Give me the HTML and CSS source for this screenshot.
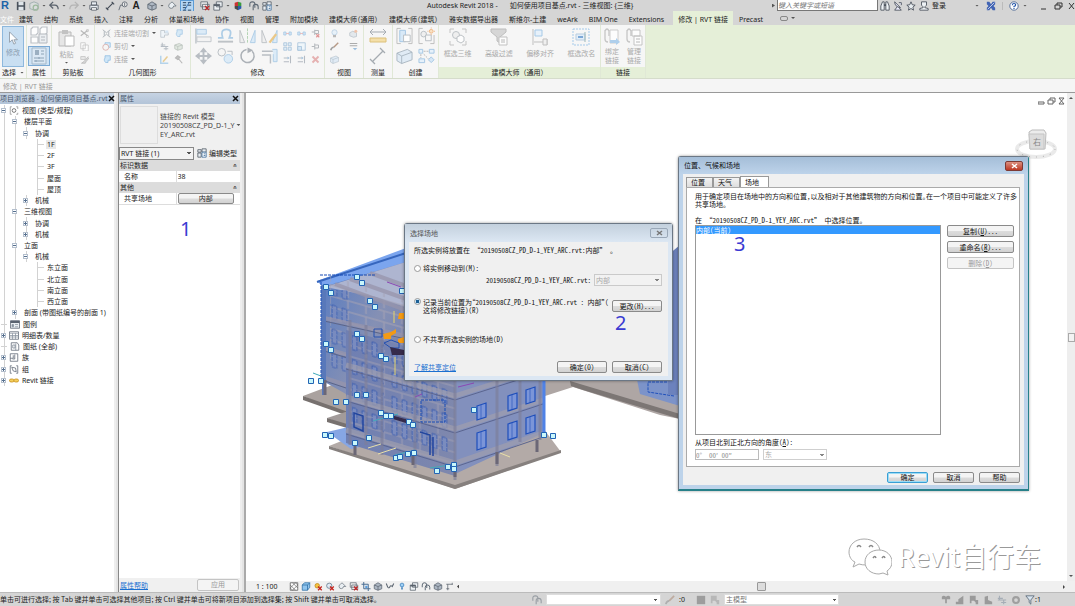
FILE: index.html
```html
<!DOCTYPE html>
<html lang="zh-CN">
<head>
    <meta charset="UTF-8">
    <meta name="viewport" content="width=device-width, initial-scale=1.0">
    <title>Autodesk Revit 2018</title>
    <link rel="stylesheet" href="styles.css">
</head>
<body>

<!-- Icon set -->
<svg class="sprite" aria-hidden="true">
    <symbol id="save" viewBox="0 0 12 12"><path d="M1 1h10v10H1z" fill="#4a525c"/><path d="M3 1h6v4H3zM3 7h6v4H3z" fill="#dfe5ea"/></symbol>
    <symbol id="sync" viewBox="0 0 12 12"><path d="M1 3l5-2 5 2v6l-5 2-5-2z" fill="#d8dcdc" stroke="#9aa"/><circle cx="8" cy="8" r="3" fill="none" stroke="#9db89d" stroke-width="1.5"/></symbol>
    <symbol id="undo" viewBox="0 0 12 12"><path d="M5 1L1 5l4 4M1 5h6q4 0 4 5" fill="none" stroke="#5a626c" stroke-width="1.5"/></symbol>
    <symbol id="redo" viewBox="0 0 12 12"><path d="M7 1l4 4-4 4M11 5H5Q1 5 1 10" fill="none" stroke="#b4b4b4" stroke-width="1.5"/></symbol>
    <symbol id="print" viewBox="0 0 12 12"><path d="M3 1h6v4H3zM1 5h10v5H1z" fill="#e8edf2" stroke="#555d66"/><path d="M3 8h6v3H3z" fill="#fff" stroke="#555d66"/></symbol>
    <symbol id="ruler" viewBox="0 0 12 12"><path d="M2 10l8-8M1 8l3 3M8 1l3 3" fill="none" stroke="#454d58" stroke-width="1.4"/></symbol>
    <symbol id="tag" viewBox="0 0 12 12"><circle cx="8" cy="4" r="3" fill="#eee" stroke="#59616c"/><path d="M1 11l2-6h3" fill="none" stroke="#59616c"/><path d="M8 2v4" stroke="#59616c"/></symbol>
    <symbol id="box3d" viewBox="0 0 12 12"><path d="M1 4l5-3 5 3v5l-5 2-5-2z" fill="#aeb8c4" stroke="#5d6671"/><path d="M1 4l5 2 5-2M6 6v5" fill="none" stroke="#5d6671"/></symbol>
    <symbol id="section" viewBox="0 0 12 12"><path d="M6 1l5 5H8a3 3 0 1 1-4-3z" fill="#e9eef2" stroke="#6e7780"/></symbol>
    <symbol id="thin" viewBox="0 0 12 12"><path d="M1 2h4M1 5h4M1 8h4M1 11h4M7 2h4M7 5h4M7 11h4" stroke="#31475e" stroke-width="1.2"/><path d="M3 11l6-10" stroke="#2c6cb0"/></symbol>
    <symbol id="closewin" viewBox="0 0 12 12"><path d="M1 1h8v6H1zM3 4h8v6H3z" fill="#eee" stroke="#626a73"/><path d="M6 6l5 5M11 6l-5 5" stroke="#c02424" stroke-width="1.5"/></symbol>
    <symbol id="windows" viewBox="0 0 12 12"><path d="M4 1h7v6H4zM1 4h7v7H1z" fill="#edf1f4" stroke="#59616b"/><path d="M1 5h7" stroke="#59616b" stroke-width="2"/></symbol>
    <symbol id="palette" viewBox="0 0 12 12"><path d="M2 2l4-1v5H2z" fill="#c33"/><path d="M6 1l4 1v4H6z" fill="#3a9a3f"/><path d="M2 6h4v5L2 9z" fill="#4a4a4a"/><path d="M6 6h4v3l-4 2z" fill="#2c5cab"/></symbol>
    <symbol id="linkman" viewBox="0 0 12 12"><path d="M1 7V4q0-3 3-3t3 3v4M5 11V7q0-3 3-3t3 3v3" fill="none" stroke="#5c6773" stroke-width="1.3"/></symbol>
    <symbol id="edittype" viewBox="0 0 12 12"><path d="M1 2h4v3H1zM6 1h5v4H6zM1 6h4v5H1z" fill="#e8edf2" stroke="#59616b"/><path d="M6 5h5v6H6z" fill="#fff" stroke="#3f6f9e"/><path d="M8 7h2M8 9h2" stroke="#3f6f9e"/></symbol>
    <symbol id="binoc" viewBox="0 0 12 12"><path d="M1 11V6l2-5h2v10zM7 11V1h2l2 5v5z" fill="#eef2f5" stroke="#434b56"/><path d="M5 5h2" stroke="#434b56" stroke-width="2"/></symbol>
    <symbol id="dish" viewBox="0 0 12 12"><path d="M2 1q0 6 7 7L2 1M5 7l-3 4h8L7 8M7 2h3v3" fill="#eef" stroke="#434b56"/></symbol>
    <symbol id="star" viewBox="0 0 12 12"><path d="M6 1l1.500 3.500L11 5 8.300 7.300 9 11 6 9 3 11l.7-3.700L1 5l3.500-.5z" fill="#e8edf0" stroke="#434b56"/></symbol>
    <symbol id="user" viewBox="0 0 12 12"><path d="M3 1h6v4L7 7v1l4 1v2H1V9l4-1V7L3 5z" fill="#eef2f5" stroke="#434b56"/></symbol>
    <symbol id="exchange" viewBox="0 0 12 12"><path d="M1 1h3l2 3 2-3h3v3L9 6l2 2v3H8L6 8l-2 3H1V8l2-2-2-2z" fill="#4264b4"/><path d="M2 10l8-8" stroke="#dfe5f2"/></symbol>
    <symbol id="help" viewBox="0 0 12 12"><circle cx="6" cy="6" r="5" fill="#fff" stroke="#3c5a8c"/><path d="M4 5q0-2 2-2t2 1.500Q8 6 6 6.500v1M6 8.500v1" fill="none" stroke="#2355a8" stroke-width="1.400"/></symbol>

    <symbol id="cursor" viewBox="0 0 12 16"><path d="M2 1v12l3-3 2 5 2-1-2-4h4z" fill="#fff" stroke="#8f9aa6"/></symbol>
    <symbol id="family" viewBox="0 0 18 18"><path d="M1 3l2-2h5v6L6 9H1zM10 3l2-2h5v6l-2 2h-5zM1 11h7v6H1z" fill="#fff" stroke="#b0b5bb" stroke-width="1.200"/><path d="M9 8h8v9H9z" fill="#e9edf1" stroke="#a3a9b0"/><path d="M11 11h4M11 14h4" stroke="#a3a9b0"/></symbol>
    <symbol id="props" viewBox="0 0 18 18"><path d="M2 1h14v16H2z" fill="#dfeaf4" stroke="#9aaebf"/><path d="M5 3h4v5H5z" fill="#8fa3b5"/><path d="M11 4h3M11 7h3M4 11h10M4 14h10M9 10v2M6 13v2" stroke="#7d93a8"/></symbol>
    <symbol id="paste" viewBox="0 0 18 18"><path d="M1 3h12v14H1z" fill="#e6e6e6" stroke="#b9b9b9"/><path d="M4 1h6v4H4z" fill="#c2c2c2"/><path d="M7 7h9v10H7z" fill="#fff" stroke="#b9b9b9"/></symbol>
    <symbol id="cut" viewBox="0 0 12 12"><path d="M1 2l9 7M1 9l9-7" stroke="#a9a9a9" stroke-width="1.500"/><circle cx="10" cy="10" r="1.500" fill="none" stroke="#a9a9a9"/><circle cx="10" cy="2" r="1.500" fill="none" stroke="#a9a9a9"/></symbol>
    <symbol id="copy" viewBox="0 0 12 12"><path d="M1 1h6v8H1zM4 4h7v8H4z" fill="#fff" stroke="#b5b5b5"/></symbol>
    <symbol id="brush" viewBox="0 0 12 12"><path d="M1 2h6v4H1z" fill="#e3e3e3" stroke="#b5b5b5"/><path d="M11 2L6 8l-4 3h5l1-2 4-5" fill="#cfcfcf" stroke="#a9a9a9"/></symbol>
    <symbol id="cope" viewBox="0 0 12 12"><path d="M1 1l5 4 5-4M1 11l5-4 5 4M3 3v6M9 3v6" fill="none" stroke="#b0b6bb" stroke-width="1.300"/></symbol>
    <symbol id="trimc" viewBox="0 0 12 12"><path d="M4 1h7v6H4z" fill="#d7ebfa" stroke="#8fbfe3"/><circle cx="5" cy="7" r="4" fill="#f6f6f6" stroke="#d6a6a0"/></symbol>
    <symbol id="join" viewBox="0 0 12 12"><path d="M4 1h7v6H8v3H5a4 4 0 0 1-1-6z" fill="#cfe6f7" stroke="#8dbbe0"/></symbol>
    <symbol id="wall" viewBox="0 0 12 12"><path d="M1 2h5v3h5v3H6v3H1z" fill="#eff5fa" stroke="#a9b4be"/><path d="M7 2h4v3H7z" fill="#cfe3f4"/></symbol>
    <symbol id="beam" viewBox="0 0 12 12"><path d="M1 4h6M1 6h10M5 9h6M3 1v5M8 6v5" fill="none" stroke="#a5adb6" stroke-width="1.300"/></symbol>
    <symbol id="cropoff" viewBox="0 0 12 12"><path d="M3 3v8M1 3h8M9 1v3M1 9h4" fill="none" stroke="#59616b"/></symbol>
    <symbol id="solid" viewBox="0 0 12 12"><path d="M1 4l6-2 4 2v5l-6 2-4-2z" fill="#dde5dd" stroke="#a9b4ac"/><path d="M1 4l4 2 6-2M5 6v5" fill="none" stroke="#a9b4ac"/></symbol>
    <symbol id="paint" viewBox="0 0 12 12"><path d="M1 1v10h10" fill="none" stroke="#a6cbe8" stroke-width="2"/><path d="M4 9l6-7" stroke="#e5c37c" stroke-width="2"/></symbol>
    <symbol id="demo" viewBox="0 0 12 12"><path d="M2 4l3-3 3 2-3 3zM6 5l5 6" fill="#b4b4b4" stroke="#a9a9a9" stroke-width="1.500"/></symbol>
    <symbol id="align" viewBox="0 0 18 18"><path d="M1 1v16" stroke="#aeb6bd" stroke-width="1.500"/><path d="M2 2h10v5H2z" fill="#d6e9f8" stroke="#9cc3e3"/><path d="M2 10h15v5H2z" fill="#f3f3f3" stroke="#b5bbc1"/></symbol>
    <symbol id="offset" viewBox="0 0 18 18"><path d="M1 11h5q-3-9 4-9t3 9h4" fill="none" stroke="#9cc3e3" stroke-width="1.800"/><path d="M1 15h16" stroke="#b0b6bb" stroke-width="2"/></symbol>
    <symbol id="mirror" viewBox="0 0 18 18"><path d="M1 16V3l5 13z" fill="#eee" stroke="#b0b6bb"/><path d="M17 16V3l-5 13z" fill="#d6e9f8" stroke="#9cc3e3"/><path d="M9 1v16" stroke="#9fc99f" stroke-dasharray="3 1"/></symbol>
    <symbol id="mirrord" viewBox="0 0 18 18"><path d="M1 16V3l5 13z" fill="#eee" stroke="#b0b6bb"/><path d="M17 16V3l-5 13z" fill="#d6e9f8" stroke="#9cc3e3"/><path d="M9 16l7-9" stroke="#e9bd6b" stroke-width="2.500"/></symbol>
    <symbol id="move" viewBox="0 0 18 18"><path d="M9 0l4 5h-3v3h3V5l5 4-5 4v-3h-3v3h3l-4 5-4-5h3v-3H5v3L0 9l5-4v3h3V5H5z" fill="#a9b0b7"/></symbol>
    <symbol id="copy2" viewBox="0 0 18 18"><circle cx="5" cy="5" r="4" fill="#f5f5f5" stroke="#aab1b8"/><circle cx="12" cy="12" r="4.500" fill="#d6e9f8" stroke="#9cc3e3"/><path d="M11 4h5v4" fill="none" stroke="#aab1b8"/></symbol>
    <symbol id="rotate" viewBox="0 0 18 18"><path d="M8 2a7 7 0 1 0 6 2" fill="none" stroke="#9aa1a8" stroke-width="1.600"/><path d="M9 0l6 3-6 3z" fill="#9aa1a8"/></symbol>
    <symbol id="trim" viewBox="0 0 18 18"><path d="M1 4h12M1 8h9v9" fill="none" stroke="#aab1b8" stroke-width="1.500"/><path d="M12 2h5v13h-4V7" fill="#d6e9f8" stroke="#9cc3e3"/></symbol>
    <symbol id="split" viewBox="0 0 12 12"><path d="M1 4h3v4H1zM8 4h3v4H8z" fill="#cfe4f6" stroke="#8fbbe0"/><path d="M4 6h4" stroke="#e0a0a0"/></symbol>
    <symbol id="array" viewBox="0 0 12 12"><path d="M1 1h4v4H1zM7 1h4v4H7zM1 7h4v4H1zM7 7h4v4H7z" fill="#dcecf9" stroke="#8fb3d2"/></symbol>
    <symbol id="scale" viewBox="0 0 12 12"><path d="M1 1h10v10H1z" fill="#eef6fc" stroke="#8fb3d2"/><path d="M1 6h5v5H1z" fill="#cfe4f6" stroke="#8fb3d2"/></symbol>
    <symbol id="ext" viewBox="0 0 12 12"><path d="M1 4h7M1 9h7M10 1v10" stroke="#a5adb6" stroke-width="1.400"/><path d="M6 2l3 2-3 2z" fill="#9bbfdd"/></symbol>
    <symbol id="pin" viewBox="0 0 12 12"><path d="M5 2v8M5 4h5v4H5M1 6h4" fill="none" stroke="#a2a8ae" stroke-width="1.300"/></symbol>
    <symbol id="unpin" viewBox="0 0 12 12"><path d="M5 1v7M5 2h5v4H5M1 4h4" fill="none" stroke="#a2a8ae" stroke-width="1.300"/><path d="M7 7l4 4M11 7l-4 4" stroke="#dd7c7c" stroke-width="1.500"/></symbol>
    <symbol id="del" viewBox="0 0 12 12"><path d="M2 2l8 8M10 2l-8 8" stroke="#e2a0a0" stroke-width="2.500"/></symbol>
    <symbol id="bulb" viewBox="0 0 12 12"><circle cx="6" cy="4.500" r="3.500" fill="#e4f0fa" stroke="#a5c3dc"/><path d="M4 8h4v3H4z" fill="#aaa"/></symbol>
    <symbol id="pen" viewBox="0 0 12 12"><path d="M11 1L5 7" stroke="#a8836b" stroke-width="2"/><path d="M1 11q1-4 4-4" stroke="#888" stroke-width="2" fill="none"/></symbol>
    <symbol id="cubeo" viewBox="0 0 12 12"><path d="M1 5l4-2 5 2v5l-4 1-5-2z" fill="#dfe5ea" stroke="#a9b4be"/><circle cx="9" cy="3" r="2" fill="#efb898"/></symbol>
    <symbol id="linew" viewBox="0 0 12 12"><path d="M1 2h10M1 5h10" stroke="#999" stroke-width="1.500"/><path d="M5 8h6l-3 3z" fill="#84b0d8"/></symbol>
    <symbol id="dim" viewBox="0 0 18 18"><path d="M1 5h16M4 2L1 5l3 3M14 2l3 3-3 3" fill="none" stroke="#a5abb1"/><path d="M1 11h16v4H1z" fill="#f4dfa9" stroke="#dcc07a"/></symbol>
    <symbol id="dim2" viewBox="0 0 18 18"><path d="M4 14L14 4M1 12l5 5M11 1l5 5" fill="none" stroke="#a5abb1" stroke-width="1.300"/></symbol>
    <symbol id="group" viewBox="0 0 18 18"><path d="M5 1H1v16h4M13 1h4v16h-4" fill="none" stroke="#b0b0b0"/><path d="M4 3h6v12H4z" fill="#d1e6f8" stroke="#8fbbe0"/><path d="M8 8h7v7H8z" fill="#fff" stroke="#a9b0b7"/></symbol>
    <symbol id="assembly" viewBox="0 0 18 18"><path d="M5 1H1v16h4M13 17h4V8" fill="none" stroke="#b0b0b0"/><circle cx="6" cy="7" r="3" fill="#eee" stroke="#a9b0b7"/><path d="M8 8h6v6H8z" fill="#f8f8f8" stroke="#a9b0b7"/><circle cx="14" cy="4" r="2" fill="#f9dcb8" stroke="#eda767"/><path d="M14 0v1M14 7v1M10 4h1M17 4h1" stroke="#eda767"/></symbol>
    <symbol id="parts" viewBox="0 0 18 18"><path d="M1 6l11-4 5 3v8L6 17l-5-3z" fill="#dbe9f5" stroke="#98a8b6"/><path d="M1 6l5 3 11-4M6 9v8" fill="none" stroke="#98a8b6"/></symbol>
    <symbol id="similar" viewBox="0 0 18 18"><path d="M1 2h4v4H1zM12 2h5v4h-5zM1 12h6v4H1z" fill="#e3f0fb" stroke="#8fbbe0"/><path d="M14 10l3 3-3 3-3-3z" fill="#cfe4f6" stroke="#8fbbe0"/><path d="M6 4h5M3 7v4M6 7l5 5" stroke="#a9a9a9" stroke-dasharray="2 1"/></symbol>
    <symbol id="pick3d" viewBox="0 0 18 18"><path d="M1 5V1h4M13 1h4v4M17 13v4h-4M5 17H1v-4" fill="none" stroke="#b8b8b8"/><circle cx="7" cy="7" r="3.500" fill="#eee" stroke="#b0b6bb"/><path d="M8 9l4-2 3 2v4l-3 2-4-2z" fill="#fff" stroke="#b0b6bb"/></symbol>
    <symbol id="filter" viewBox="0 0 18 18"><path d="M1 1h15v3l-6 5v6l-3-2V9L1 4z" fill="#cfcfcf" stroke="#b0b0b0"/><path d="M9 9h8v8H9z" fill="#fff" stroke="#b5b5b5"/><path d="M11 12h4M11 14h4" stroke="#aaa"/></symbol>
    <symbol id="shift" viewBox="0 0 18 18"><path d="M2 1v16M16 11v6M3 14h12" stroke="#b3b3b3" fill="none"/><path d="M4 2h7v6H4z" fill="#e4f1fc" stroke="#93bfe4"/><path d="M12 11h4v6h-4z" fill="#eee" stroke="#b3b3b3"/></symbol>
    <symbol id="rename" viewBox="0 0 18 18"><path d="M1 1h16v16H1z" fill="none" stroke="#93c0e8" stroke-dasharray="2 1"/><path d="M4 6h9v6H4z" fill="#dcebf9" stroke="#a9c4dc"/><path d="M6 9h5" stroke="#5e95d0" stroke-width="2"/><path d="M13 4v10" stroke="#8aa"/></symbol>
    <symbol id="bind" viewBox="0 0 18 18"><path d="M2 2v9q0 3 3 3M6 2v6M2 3q2-4 4 0" fill="none" stroke="#bbb" stroke-width="1.300"/><path d="M7 2h8v13H7z" fill="#fff" stroke="#c4c4c4"/><path d="M7 12h6v-2l4 4-4 3v-2H7z" fill="#9dc6ea"/></symbol>
    <symbol id="mlink" viewBox="0 0 18 18"><path d="M2 2v9q0 3 3 3M6 2v6M2 3q2-4 4 0" fill="none" stroke="#bbb" stroke-width="1.300"/><path d="M7 2h8v6H7zM9 8h8v9H9z" fill="#fff" stroke="#b8b8b8"/><path d="M11 11h4M11 14h4" stroke="#aaa"/></symbol>

    <symbol id="views" viewBox="0 0 12 12"><path d="M3 1H1v10h2M9 1h2v3M9 11h2V9" fill="none" stroke="#8b8b8b"/><circle cx="6" cy="6" r="2.500" fill="#fff" stroke="#555"/></symbol>
    <symbol id="legend" viewBox="0 0 12 12"><path d="M0 1h12v10H0z" fill="#eaeef2" stroke="#5a6370"/><path d="M0 1h12v3H0z" fill="#5a6370"/><path d="M2 6h2v3H2zM6 6h4M6 9h4" fill="#8994a0" stroke="#8994a0"/></symbol>
    <symbol id="sched" viewBox="0 0 12 12"><path d="M0 1h12v10H0z" fill="#fff" stroke="#5a6370"/><path d="M0 3h12M0 6h12M0 8h12M4 3v8M8 3v8" stroke="#8a939f"/></symbol>
    <symbol id="sheet" viewBox="0 0 12 12"><path d="M1 1h8l2 3v7H1z" fill="#fff" stroke="#5a6370"/><path d="M3 4h3v4H3zM7 2v9" fill="none" stroke="#7a8490"/></symbol>
    <symbol id="fam" viewBox="0 0 12 12"><path d="M1 1h10v10H1z" fill="#fff" stroke="#5a6370"/><path d="M1 7h4V3M7 2v6H4" fill="none" stroke="#5a6370"/></symbol>
    <symbol id="grp" viewBox="0 0 12 12"><path d="M3 1H1v10h2M9 1h2v10H9" fill="none" stroke="#5a6370"/><path d="M3 3l5 1 1 5-4-1z" fill="#fff" stroke="#5a6370"/></symbol>
    <symbol id="chain" viewBox="0 0 12 12"><rect x="0" y="4" width="6" height="4" rx="2" fill="#f5cf5c" stroke="#c48a12"/><rect x="6" y="4" width="6" height="4" rx="2" fill="#f5cf5c" stroke="#c48a12"/></symbol>

    <symbol id="detail" viewBox="0 0 12 12"><path d="M1 1h10v10H1z" fill="#fff" stroke="#555"/><path d="M1 4l7 7M1 8l3 3M4 1l7 7M8 1l3 3M1 8l7-7M4 11l7-7" stroke="#555" stroke-width=".8"/></symbol>
    <symbol id="visual" viewBox="0 0 12 12"><path d="M1 4l3-3h7v6l-3 4H1z" fill="#8fc4ee" stroke="#2b6ba2"/><path d="M1 4h7v7M8 4l3-3" fill="none" stroke="#2b6ba2"/></symbol>
    <symbol id="sun" viewBox="0 0 12 12"><circle cx="5" cy="5" r="3" fill="#f5c441" stroke="#bd8310"/><path d="M6 6l5 5M11 6l-5 5" stroke="#c5241d" stroke-width="1.700"/></symbol>
    <symbol id="shadow" viewBox="0 0 12 12"><circle cx="5" cy="5" r="3.500" fill="#dfeaf4" stroke="#5b7186"/><path d="M6 6l5 5M11 6l-5 5" stroke="#c5241d" stroke-width="1.700"/></symbol>
    <symbol id="crop" viewBox="0 0 12 12"><path d="M3 0v9h9M0 3h9v9" fill="none" stroke="#486c92" stroke-width="1.300"/><path d="M5 5h3v3H5z" fill="#5a9ede"/></symbol>
    <symbol id="glass" viewBox="0 0 12 12"><path d="M1 2l2 5q2 2 3-1 1-2 3 0l2-4" fill="none" stroke="#5b6570" stroke-width="1.400"/></symbol>
    <symbol id="reveal" viewBox="0 0 12 12"><circle cx="6" cy="4" r="2.500" fill="#9fd0f6" stroke="#377dbb"/><path d="M5 7h2v3H5z" fill="#377dbb"/></symbol>
    <symbol id="selLink" viewBox="0 0 12 12"><path d="M1 2q2-2 5 0 3-2 5 0v3H7v5H5V5H1z" fill="#9a9a9a"/></symbol>
    <symbol id="selUnder" viewBox="0 0 12 12"><path d="M10 1v10H1V8h3V5z" fill="#9a9a9a"/></symbol>
    <symbol id="selPin" viewBox="0 0 12 12"><path d="M1 1h7v5h3v5H8V9L6 7H3v3H1z" fill="#9a9a9a"/></symbol>
    <symbol id="selFace" viewBox="0 0 12 12"><path d="M2 2l4-1v5l5 2v3H2z" fill="#9a9a9a"/></symbol>
    <symbol id="funnel" viewBox="0 0 12 12"><path d="M1 1h10L7 6v5L5 9V6z" fill="#d7e4f0" stroke="#586675"/></symbol>
    <symbol id="gear" viewBox="0 0 12 12"><circle cx="6" cy="6" r="3.500" fill="none" stroke="#9f9f9f" stroke-width="2.500"/></symbol>
    <symbol id="block" viewBox="0 0 12 12"><path d="M1 1h10v10H1z" fill="#666"/></symbol>
    <symbol id="handle" viewBox="0 0 6 6"><path d="M.5.5h5v5h-5z" fill="#c9f7fb" stroke="#2364b4"/></symbol>
</svg>

<header class="titlebar">
    <div class="quick">
        <b class="logo">R</b>
        <svg class="ic push"><use href="#save"/></svg>
        <svg class="ic"><use href="#sync"/></svg><i class="dd"></i>
        <svg class="ic"><use href="#undo"/></svg><i class="dd"></i>
        <svg class="ic"><use href="#redo"/></svg><i class="dd"></i>
        <svg class="ic"><use href="#print"/></svg>
        <svg class="ic push"><use href="#ruler"/></svg>
        <svg class="ic"><use href="#tag"/></svg>
        <b class="texta">A</b>
        <svg class="ic push"><use href="#box3d"/></svg><i class="dd"></i>
        <svg class="ic"><use href="#section"/></svg>
        <span class="on"><svg class="ic"><use href="#thin"/></svg></span>
        <svg class="ic push"><use href="#closewin"/></svg>
        <svg class="ic"><use href="#windows"/></svg><i class="dd"></i>
        <svg class="ic"><use href="#palette"/></svg>
        <svg class="ic push"><use href="#linkman"/></svg>
        <svg class="ic"><use href="#edittype"/></svg><i class="dd"></i>
    </div>
    <h1 class="apptitle"><span>Autodesk Revit 2018 -</span><span>如何使用项目基点.rvt - 三维视图: {三维}</span></h1>
    <div class="search"><i class="dd side"></i><input type="text" aria-label="搜索" placeholder="键入关键字或短语"></div>
    <div class="account">
        <svg class="ic"><use href="#binoc"/></svg>
        <svg class="ic"><use href="#dish"/></svg>
        <svg class="ic"><use href="#star"/></svg>
        <svg class="ic"><use href="#user"/></svg>
        <a href="#">登录</a>
    </div>
    <div class="winbtns">
        <i class="dd"></i>
        <svg class="ic"><use href="#exchange"/></svg>
        <i class="bar"></i>
        <svg class="ic"><use href="#help"/></svg><i class="dd"></i>
        <svg class="wb" viewBox="0 0 34 8"><path d="M0 7h5M14 3h5v4h-5zM16 3V1h5v4h-2M28 1l5 6M33 1l-5 6" fill="none" stroke="#333"/></svg>
    </div>
</header>

<nav class="tabs">
    <a href="#" class="file">文件</a>
    <a href="#">建筑</a>
    <a href="#">结构</a>
    <a href="#">系统</a>
    <a href="#">插入</a>
    <a href="#">注释</a>
    <a href="#">分析</a>
    <a href="#">体量和场地</a>
    <a href="#">协作</a>
    <a href="#">视图</a>
    <a href="#">管理</a>
    <a href="#">附加模块</a>
    <a href="#">建模大师（通用）</a>
    <a href="#">建模大师（建筑）</a>
    <a href="#">雅安数据导出器</a>
    <a href="#">斯维尔-土建</a>
    <a href="#">weArk</a>
    <a href="#">BIM One</a>
    <a href="#">Extensions</a>
    <a href="#" class="active">修改 | RVT 链接</a>
    <a href="#">Precast</a>
    <span class="toggle"></span><i class="dd"></i>
</nav>

<section class="ribbon">
    <div class="panel w-select"><div class="body"><button class="big on"><svg class="cur"><use href="#cursor"/></svg>修改</button></div><h2>选择 <i class="dd"></i></h2></div>
    <div class="panel w-props"><div class="body stack"><svg class="ic18"><use href="#family"/></svg><span class="pbtn"><svg class="ic18"><use href="#props"/></svg></span></div><h2>属性</h2></div>
    <div class="panel w-clip"><div class="body"><button class="big"><svg class="ic18"><use href="#paste"/></svg>粘贴<i class="dd"></i></button><div class="g1"><svg><use href="#cut"/></svg><svg><use href="#copy"/></svg><svg><use href="#brush"/></svg></div></div><h2>剪贴板</h2></div>
    <div class="panel w-geo"><div class="body">
        <div class="lines">
            <button><svg><use href="#cope"/></svg>连接端切割<i class="dd"></i></button>
            <button><svg><use href="#trimc"/></svg>剪切<i class="dd"></i></button>
            <button><svg><use href="#join"/></svg>连接<i class="dd"></i></button>
        </div>
        <div class="g2"><svg><use href="#wall"/></svg><svg><use href="#join"/></svg><svg><use href="#beam"/></svg><svg><use href="#solid"/></svg><svg><use href="#paint"/></svg><svg><use href="#demo"/></svg></div>
    </div><h2>几何图形</h2></div>
    <div class="panel w-mod"><div class="body">
        <div class="g4"><svg><use href="#align"/></svg><svg><use href="#offset"/></svg><svg><use href="#mirror"/></svg><svg><use href="#mirrord"/></svg><svg><use href="#move"/></svg><svg><use href="#copy2"/></svg><svg><use href="#rotate"/></svg><svg><use href="#trim"/></svg></div>
        <div class="g3"><svg><use href="#split"/></svg><svg><use href="#split"/></svg><svg><use href="#unpin"/></svg><svg><use href="#array"/></svg><svg><use href="#scale"/></svg><svg><use href="#pin"/></svg><svg><use href="#ext"/></svg><svg><use href="#ext"/></svg><svg><use href="#del"/></svg></div>
    </div><h2>修改</h2></div>
    <div class="panel w-view"><div class="body"><div class="g2 wide"><svg><use href="#bulb"/></svg><svg><use href="#cubeo"/></svg><svg><use href="#pen"/></svg><svg><use href="#linew"/></svg><svg><use href="#parts"/></svg></div></div><h2>视图</h2></div>
    <div class="panel w-meas"><div class="body stack"><svg class="ic18"><use href="#dim"/></svg><svg class="ic18"><use href="#dim2"/></svg></div><h2>测量</h2></div>
    <div class="panel w-create"><div class="body"><div class="g4 two"><svg><use href="#group"/></svg><svg><use href="#assembly"/></svg><svg><use href="#parts"/></svg><svg><use href="#similar"/></svg></div></div><h2>创建</h2></div>
    <div class="panel green w-bim"><div class="body">
        <button class="big"><svg class="ic18"><use href="#pick3d"/></svg>框选三维</button>
        <button class="big"><svg class="ic18"><use href="#filter"/></svg>高级过滤</button>
        <button class="big"><svg class="ic18"><use href="#shift"/></svg>偏移对齐</button>
        <button class="big"><svg class="ic18"><use href="#rename"/></svg>框选改名</button>
    </div><h2>建模大师（通用）</h2></div>
    <div class="panel green w-link"><div class="body">
        <button class="big"><svg class="ic18"><use href="#bind"/></svg>绑定<br>链接</button>
        <button class="big"><svg class="ic18"><use href="#mlink"/></svg>管理<br>链接</button>
    </div><h2>链接</h2></div>
</section>

<div class="options">修改 | RVT 链接</div>

<main class="work">
    <aside class="browser">
        <h2 class="dock"><span>项目浏览器 - 如何使用项目基点.rvt</span><button aria-label="关闭"><svg><path d="M1 1l5 5M6 1l-5 5"/></svg></button></h2>
        <ul class="tree">
            <li class="l0"><i class="ex"></i><svg><use href="#views"/></svg>视图 (类型/规程)</li>
            <li class="l1"><i class="ex"></i>楼层平面</li>
            <li class="l2"><i class="ex"></i>协调</li>
            <li class="l3"><span class="cur-view">1F</span></li>
            <li class="l3">2F</li>
            <li class="l3">3F</li>
            <li class="l3">屋面</li>
            <li class="l3">屋顶</li>
            <li class="l2"><i class="ex plus"></i>机械</li>
            <li class="l1"><i class="ex"></i>三维视图</li>
            <li class="l2"><i class="ex plus"></i>协调</li>
            <li class="l2"><i class="ex plus"></i>机械</li>
            <li class="l1"><i class="ex"></i>立面</li>
            <li class="l2"><i class="ex"></i>机械</li>
            <li class="l3">东立面</li>
            <li class="l3">北立面</li>
            <li class="l3">南立面</li>
            <li class="l3">西立面</li>
            <li class="l1"><i class="ex plus"></i>剖面 (带图纸编号的剖面 1)</li>
            <li class="l0 leaf"><svg><use href="#legend"/></svg>图例</li>
            <li class="l0"><i class="ex plus"></i><svg><use href="#sched"/></svg>明细表/数量</li>
            <li class="l0 leaf"><svg><use href="#sheet"/></svg>图纸 (全部)</li>
            <li class="l0"><i class="ex plus"></i><svg><use href="#fam"/></svg>族</li>
            <li class="l0"><i class="ex plus"></i><svg><use href="#grp"/></svg>组</li>
            <li class="l0"><i class="ex plus"></i><svg><use href="#chain"/></svg>Revit 链接</li>
        </ul>
    </aside>

    <aside class="props">
        <h2 class="dock"><span>属性</span><button aria-label="关闭"><svg><path d="M1 1l5 5M6 1l-5 5"/></svg></button></h2>
        <div class="type">
            <div class="thumb"></div>
            <p>链接的 Revit 模型<br>20190508CZ_PD_D-1_Y<br>EY_ARC.rvt</p>
            <i class="dd"></i>
        </div>
        <div class="inst">
            <select aria-label="实例"><option>RVT 链接 (1)</option></select>
            <button><svg class="ic"><use href="#edittype"/></svg>编辑类型</button>
        </div>
        <table>
            <colgroup><col class="name"><col></colgroup>
            <tr><th colspan="2">标识数据<span>«</span></th></tr>
            <tr><td>名称</td><td><input type="text" aria-label="名称" value="38"></td></tr>
            <tr><th colspan="2">其他<span>«</span></th></tr>
            <tr><td>共享场地</td><td><button class="btn">内部</button></td></tr>
        </table>
        <b class="note n1">1</b>
        <div class="foot"><a href="#">属性帮助</a><button class="btn" disabled>应用</button></div>
    </aside>

    <section class="view">
        <div class="canvas">
            <svg class="model" viewBox="300 240 390 255" aria-hidden="true">
                <defs>
                    <pattern id="win" width="10" height="24" patternUnits="userSpaceOnUse" patternTransform="skewY(18)">
                        <path d="M2 5h5v14H2z" fill="#7a8cc0" stroke="#2a50ac" stroke-width=".8" stroke-dasharray="4 1"/>
                    </pattern>
                    <pattern id="beams" width="18" height="11" patternUnits="userSpaceOnUse" patternTransform="skewY(16)">
                        <path d="M0 3h18M6 3v8" stroke="#a5a2b4" stroke-width="1.500" fill="none"/>
                    </pattern>
                    <linearGradient id="face" x1="0" y1="0" x2="1" y2="1"><stop offset="0" stop-color="#5279c4"/><stop offset=".5" stop-color="#8590b4"/><stop offset="1" stop-color="#6d7aab"/></linearGradient>
                    <linearGradient id="front" x1="0" y1="0" x2="1" y2="0"><stop offset="0" stop-color="#6f7fb2"/><stop offset="1" stop-color="#7f88ad"/></linearGradient>
                </defs>
                <!-- ground slabs -->
                <path d="M329 446l70-28 144 10 18 24-106 37z" fill="#b3aaa7"/>
                <path d="M329 446l126 39 106-35v3l-106 36-126-40z" fill="#86807e"/>
                <path d="M303 396l45-17 30 28-24 11z" fill="#aaa29f"/>
                <path d="M303 396l51 18v4l-51-18z" fill="#77716f"/>
                <path d="M327 418l40-13 10 20-20 5z" fill="#a29b9a"/>
                <path d="M327 418l30 9v4l-30-9z" fill="#77716f"/>
                <path d="M327 432l30-7 12 20-18 4z" fill="#86a6e4"/>
                <!-- far wing -->
                <path d="M540 375h140v44l-20-4-87-28-28 9z" fill="#aea6a4"/>
                <path d="M570 381l110 33v5l-97-29-12-4z" fill="#7c7674"/>
                <path d="M636 375h44v31l-40-12z" fill="#7c93c9"/>
                <path d="M648 382h26v14l-26-4z" fill="none" stroke="#1f50bb" stroke-dasharray="3 1"/>
                <path d="M668 255l12-10v150h-12z" fill="#6c82bd"/>
                <!-- left block -->
                <path d="M321 282l85-28v190l-56-24-4-26-25-14z" fill="url(#face)"/>
                <path d="M317 281l89-33v14l-83 25z" fill="#7ba5ee"/>
                <path d="M317 282l89-29" stroke="#3666be" stroke-width="2"/>
                <path d="M325 287l81-25v45l-30-10z" fill="#aeb5d0"/>
                <path d="M330 275l76 26v80l-76-20z" fill="url(#beams)" opacity=".7"/>
                <path d="M328 290h20v85h-20z" fill="url(#win)" opacity=".8"/>
                <path d="M324 318l82 18M324 348l82 24M322 377l84 28M335 284l70 26M350 279l56 20M370 273l36 13" stroke="#9794ab" stroke-width="4" opacity=".75" fill="none"/>
                <path d="M324 321l82 18M324 351l82 24M322 380l84 28" stroke="#5d6588"/>
                <!-- front block -->
                <path d="M346 330l109 30v116l-109-33z" fill="url(#front)"/>
                <path d="M455 360l88 10v63l-88 41z" fill="#8290bd"/>
                <path d="M350 340l105 30v95l-105-30z" fill="url(#beams)" opacity=".6"/>
                <path d="M352 335h32v98l-32-12zM388 350h60v102l-60-16z" fill="url(#win)" opacity=".9"/>
                <path d="M346 365l109 31 88-28M346 397l109 32 88-29M346 430l109 33 88-30" fill="none" stroke="#a09eae" stroke-width="5" opacity=".7"/>
                <path d="M346 369l109 31 88-28M346 401l109 32 88-29M346 434l109 33 88-30" fill="none" stroke="#5b658f"/>
                <path d="M350 320v125M366 325v120M382 330v125M415 360v108M455 365v115M497 368v98M520 372v70M540 366v74" stroke="#7d7e99" stroke-width="3" opacity=".65"/>
                <path d="M477 406l9-3v14l-9 3zM508 396l9-3v15l-9 3zM526 390l9-3v14l-9 3zM477 433l9-3v17l-9 3zM508 424l9-3v16l-9 3zM526 418l9-3v16l-9 3z" fill="#7b95d8" stroke="#1f4fbb" stroke-width="1.200"/>
                <path d="M481 405v14M512 395v15M530 389v14M481 432v17M512 423v15M530 417v15" stroke="#1f4fbb" stroke-width=".6"/>
                <path d="M420 432l10 3v20M433 437v19M354 413l9 3v15l-9-4z" fill="none" stroke="#23469e" stroke-width="1.500"/>
                <path d="M324 285v110" stroke="#5878ba" stroke-width="4"/>
                <path d="M544 380v53" stroke="#4f82e6" stroke-width="3"/>
                <path d="M320 275h55M321 282v98M421 400h24v22h-24z" fill="none" stroke="#174ab5" stroke-dasharray="3 1"/>
                <!-- plant and pipes -->
                <path d="M383 334l8-2 5-3v4l-5 3v3h-7zM398 339l6-2v6h-6zM399 313h5v6h-6z" fill="#f39a14"/>
                <path d="M374 329h8v8h-8zM384 343l7-3 8 3v5h-8z" fill="none" stroke="#2450b0"/>
                <path d="M390 347l14 3v5h-12zM391 415l18 5v4l-16-5z" fill="#352b4b"/>
                <path d="M394 311v12M395 357v18" stroke="#e3d36c"/>
                <path d="M313 373l8 3M373 421l25-7M395 455l20-5M430 468l20-3" stroke="#41aaba"/>
                <path d="M368 448l13-4M378 454l18-6M500 453l10 4" stroke="#e8dfa8"/>
                <path d="M415 397l7-3M458 387l16-4M387 282l14 5" stroke="#8b48b4"/>
                <path d="M325 380v15M355 443v12M413 455v10M455 465v12M497 452v12M537 440v12" stroke="#6b6776" stroke-width="3"/>
                <g id="handles"></g>
            </svg>
            <svg class="cube" viewBox="0 0 46 32"><ellipse cx="22" cy="21" rx="19" ry="8" fill="none" stroke="#eaeaea" stroke-width="4"/><ellipse cx="22" cy="21" rx="19" ry="8" fill="none" stroke="#aaa" stroke-dasharray="1 6"/><path d="M15 4l3-2h12l2 3-1 16H16z" fill="#ececec" stroke="#bbb"/><path d="M15 6h15v15H16z" fill="#dcdcdc" stroke="#c4c4c4"/><text x="19" y="17" font-size="8" fill="#888">右</text></svg>
            <svg class="mdi" viewBox="0 0 28 8"><path d="M0 5h6v2H0zM10 3h5v4h-5zM12 3V1h5v4h-2M21 1l5 6M26 1l-5 6M21 1h5M21 7h5" fill="#fff" stroke="#666"/></svg>
            <div class="mark">
                <svg viewBox="0 0 44 38"><g fill="#fff" stroke="#aaa"><path d="M16 1C7 1 1 7 1 14c0 5 3 9 6 10l-2 5 6-3q3 1 7 1C27 27 32 21 32 14 32 6 25 1 16 1z"/><path d="M31 12c-8 0-14 5-14 12s6 12 14 12l4-1 5 2-1-4c3-2 5-5 5-9 0-7-6-12-13-12z"/></g><path d="M9 9q2-3 4 0M21 9q2-3 4 0M25 20q2-3 3 0M34 20q2-3 3 0" fill="none" stroke="#888" stroke-width="1.500"/></svg>
                <span>Revit自行车</span>
            </div>

            <form class="dialog pick">
                <h3>选择场地<button type="button" class="x" aria-label="关闭"><svg><path d="M1 1l5 4M6 1L1 5"/></svg></button></h3>
                <div class="dbody">
                    <p>所选实例将放置在 “20190508CZ_PD_D-1_YEY_ARC.rvt:内部” 。</p>
                    <label><input type="radio" name="site">将实例移动到(M):</label>
                    <div class="target"><label for="pos">20190508CZ_PD_D-1_YEY_ARC.rvt:</label><select id="pos" disabled><option>内部</option></select></div>
                    <div class="record"><label><input type="radio" name="site" checked><span>记录当前位置为“20190508CZ_PD_D-1_YEY_ARC.rvt : 内部”(<br>这将修改链接)(R)</span></label><button type="button" class="btn">更改(H)...</button></div>
                    <label class="noshare"><input type="radio" name="site">不共享所选实例的场地(D)</label>
                    <div class="actions"><a href="#">了解共享定位</a><button type="button" class="btn">确定(O)</button><button type="button" class="btn">取消(C)</button></div>
                </div>
                <b class="note n2">2</b>
            </form>

            <form class="dialog place">
                <h3>位置、气候和场地<button type="button" class="x" aria-label="关闭"><svg><path d="M1 1l5 4M6 1L1 5"/></svg></button></h3>
                <div class="dbody">
                    <div class="dtabs"><button type="button">位置</button><button type="button">天气</button><button type="button" class="active">场地</button></div>
                    <div class="pane">
                        <p class="intro">用于确定项目在场地中的方向和位置，以及相对于其他建筑物的方向和位置。在一个项目中可能定义了许多<br>共享场地。</p>
                        <p>在 “20190508CZ_PD_D-1_YEY_ARC.rvt” 中选择位置。</p>
                        <div class="sites">
                            <ul role="listbox" aria-label="位置"><li role="option" aria-selected="true">内部(当前)</li></ul>
                            <div class="side-btns">
                                <button type="button" class="btn">复制(<u>U</u>)...</button>
                                <button type="button" class="btn">重命名(<u>R</u>)...</button>
                                <button type="button" class="btn" disabled>删除(<u>D</u>)</button>
                            </div>
                        </div>
                        <label class="plain" for="angle">从项目北到正北方向的角度(<u>A</u>):</label>
                        <div class="angle"><input id="angle" type="text" value="0°  00′ 00″" disabled><select aria-label="方向" disabled><option>东</option></select></div>
                    </div>
                    <div class="actions"><button type="button" class="btn default">确定</button><button type="button" class="btn">取消</button><button type="button" class="btn">帮助</button></div>
                </div>
                <b class="note n3">3</b>
            </form>
        </div>
        <div class="vscroll"><i class="up"></i><i class="thumb"></i><i class="down"></i></div>
        <div class="viewbar">
            <span class="ratio">1 : 100</span>
            <svg><use href="#detail"/></svg><svg><use href="#visual"/></svg><svg><use href="#sun"/></svg><svg><use href="#shadow"/></svg><svg><use href="#section"/></svg><svg><use href="#closewin"/></svg><svg><use href="#crop"/></svg><svg><use href="#box3d"/></svg><svg><use href="#glass"/></svg><svg><use href="#reveal"/></svg><svg><use href="#windows"/></svg><svg><use href="#linkman"/></svg><svg><use href="#box3d"/></svg><svg><use href="#cropoff"/></svg>
            <i class="left"></i>
            <div class="hscroll"><i class="thumb"></i></div>
            <i class="right"></i>
        </div>
    </section>
</main>

<footer class="status">
    <p>单击可进行选择; 按 Tab 键并单击可选择其他项目; 按 Ctrl 键并单击可将新项目添加到选择集; 按 Shift 键并单击可取消选择。</p>
    <div class="worksets">
        <svg><use href="#linkman"/></svg>
        <select aria-label="工作集"><option></option></select>
        <svg><use href="#pen"/></svg><span>:0</span>
        <svg class="push"><use href="#block"/></svg><svg><use href="#selPin"/></svg>
        <select aria-label="设计选项"><option>主模型</option></select>
    </div>
    <div class="picks"><svg><use href="#selLink"/></svg><svg><use href="#selUnder"/></svg><svg><use href="#selPin"/></svg><svg><use href="#selFace"/></svg><svg><use href="#beam"/></svg><svg><use href="#gear"/></svg><svg><use href="#funnel"/></svg><span>:1</span></div>
</footer>

<script>
    // shape handles of the selected link
    var points = [[357,277],[362,283],[326,287],[331,293],[402,291],[370,301],[375,307],[357,334],[362,339],
        [326,344],[331,350],[381,356],[386,359],[311,381],[321,381],[357,395],[366,395],[336,402],[346,402],
        [381,413],[386,416],[391,416],[409,422],[413,425],[325,435],[331,436],[355,443],[369,438],[396,458],
        [400,457],[408,454],[414,453],[437,471],[448,467],[454,465],[454,469],[474,410],[544,435],[553,436]];
    document.getElementById('handles').innerHTML = points.map(function(p) {
        return '<use href="#handle" x="' + (p[0] - 3) + '" y="' + (p[1] - 3) + '" width="6" height="6"/>';
    }).join('');
</script>
</body>
</html>
```
FILE: styles.css
```css
:root {
    --ui: "Noto Sans", "Noto Sans CJK SC", sans-serif;
    --song: "Noto Sans CJK SC", sans-serif;
    --chrome: #d5d5d5;
    --green: #e5efd8;
    --line: #c9c9c9;
}

* { box-sizing: border-box; }

body {
    margin: 0;
    height: 100vh;
    overflow: hidden;
    display: flex;
    flex-direction: column;
    background: #f0f0f0;
    color: #222;
    font: 7px/9px var(--ui);
}

h1, h2, h3, p, ul { margin: 0; padding: 0; font: inherit; }
ul { list-style: none; }
button, input, select { font: inherit; color: inherit; margin: 0; padding: 0; }
button { background: none; border: 0; }
a { color: inherit; text-decoration: none; }
svg { display: block; flex: none; }
.sprite { position: absolute; width: 0; height: 0; }
.ic { width: 10px; height: 10px; }
.ic18 { width: 18px; height: 18px; }

/* small black drop-down arrow */
.dd {
    flex: none;
    width: 4px;
    height: 2px;
    background: #555;
    clip-path: polygon(0 0, 100% 0, 50% 100%);
}
.dd.side { height: 4px; width: 3px; clip-path: polygon(0 0, 100% 50%, 0 100%); }

/* Title bar */
.titlebar {
    flex: none;
    height: 11px;
    display: flex;
    align-items: center;
    background: var(--chrome);
}
.quick { display: flex; align-items: center; gap: 3px; width: 427px; }
.quick .push { margin-left: 3px; }
.logo { width: 10px; padding-left: 1px; color: #1c64a8; font: bold 11px/11px "Liberation Sans", sans-serif; }
.texta { width: 10px; font: bold 10px/11px "Liberation Sans", sans-serif; text-align: center; }
.quick .on { width: 14px; padding: 0 1px; border: 1px solid #5b9bd5; background: #b7d7f3; }
.apptitle { display: flex; gap: 12px; width: 345px; white-space: nowrap; }
.search { display: flex; align-items: center; gap: 2px; width: 106px; }
.search input { flex: 1; min-width: 0; height: 11px; border: 1px solid #777; border-top: 0; background: #fff; font-style: italic; }
.account { display: flex; align-items: center; gap: 3px; margin-left: 2px; }
.winbtns { margin-left: auto; display: flex; align-items: center; gap: 4px; }
.winbtns .dd:first-child { margin-right: 3px; }
.winbtns .bar { width: 1px; height: 8px; margin: 0 2px; background: #bbb; }
.winbtns .wb { width: 34px; height: 8px; margin-left: 10px; }

/* Ribbon tabs */
.tabs {
    flex: none;
    height: 14px;
    display: flex;
    align-items: stretch;
    gap: 11px;
    background: var(--chrome);
    line-height: 17px;
    white-space: nowrap;
    font-feature-settings: "halt";
}
.tabs .file { margin-right: -6px; color: #fff; }
.tabs .active { background: var(--green); padding: 0 5px; margin: 0 -5px 0 -2px; }
.tabs .toggle { align-self: center; width: 8px; height: 5px; border: 1px solid #888; border-radius: 2px; margin-left: 6px; }
.tabs > .dd { align-self: center; margin-left: -8px; }

/* Ribbon panels */
.ribbon {
    flex: none;
    height: 54px;
    display: flex;
    background: var(--green);
    border-bottom: 1px solid #d5dccb;
}
.panel {
    flex: none;
    display: flex;
    flex-direction: column;
    background: #f6f6f6;
    border-right: 1px solid #e0e8d6;
}
.panel .body { flex: 1; display: flex; align-items: center; justify-content: center; gap: 4px; min-height: 0; color: #aaa; }
.panel .big.on { color: #8a9db0; }
.panel h2 { display: flex; align-items: center; justify-content: center; gap: 4px; height: 11px; }
.panel.green h2 { background: var(--green); }
.panel.green .body { align-items: flex-start; padding-top: 3px; }
.w-select { width: 27px; }
.w-props { width: 25px; }
.w-clip { width: 43px; }
.w-geo { width: 96px; }
.w-mod { width: 134px; }
.w-view { width: 39px; }
.w-meas { width: 29px; }
.w-create { width: 46px; }
.w-bim { width: 162px; }
.w-bim .body { justify-content: space-around; }
.w-link { width: 45px; }
.big { display: flex; flex-direction: column; align-items: center; gap: 3px; }
.w-link .big { gap: 1px; }
.big.on { width: 22px; height: 41px; padding-top: 4px; border: 1px solid #8db8dd; background: #c9dff2; }
.cur { width: 12px; height: 14px; }
.stack { flex-direction: column; }
.panel .stack { gap: 2px; }
.pbtn { padding: 0 1px; border: 1px solid #7aa9d4; background: #cfe3f5; }
.g1, .g2, .g3 { display: grid; gap: 4px 5px; opacity: .8; }
.g1 svg, .g2 svg, .g3 svg, .lines svg { width: 9px; height: 9px; }
.g2 { grid-template-columns: 9px 9px; }
.g2.wide { column-gap: 10px; }
.g3 { grid-template-columns: 9px 9px 9px; }
.g4 { display: grid; grid-template-columns: repeat(4, 18px); gap: 2px 4px; opacity: .8; }
.g4 svg { width: 17px; height: 18px; }
.g4.two { grid-template-columns: 18px 18px; }
.w-bim svg, .w-link svg, .w-props .ic18 { opacity: .8; }
.lines { display: flex; flex-direction: column; gap: 4px; }
.lines button { display: flex; align-items: center; gap: 3px; }

.options {
    flex: none;
    height: 14px;
    padding-left: 3px;
    line-height: 15px;
    background: #f5f5f5;
    border-bottom: 1px solid #999;
    color: #999;
}

/* Docked panels */
.work { flex: 1; min-height: 0; display: flex; gap: 2px; background: #e4e4e4; }
.browser { flex: none; width: 116px; display: flex; flex-direction: column; background: #fff; border-right: 2px solid #eee; }
.dock {
    flex: none;
    height: 11px;
    display: flex;
    justify-content: space-between;
    align-items: center;
    background: linear-gradient(#c6d3e3, #b3c4d8);
    color: #47566b;
    font-family: var(--song);
    white-space: nowrap;
}
.props .dock { padding-left: 1px; }
.dock button { width: 8px; }
.dock svg { width: 7px; height: 7px; stroke: #111; stroke-width: 1.5; }

.tree { height: 281px; margin-top: 1px; display: grid; grid-auto-rows: 1fr; align-items: stretch; white-space: nowrap; }
.tree li {
    --g: linear-gradient(#d2d2d2, #d2d2d2);
    display: flex;
    align-items: center;
    gap: 3px;
    background-repeat: no-repeat;
    background-size: 1px 100%;
}
.tree svg { width: 10px; height: 9px; }
.tree .l0 { padding-left: 1px; background-image: var(--g); background-position: 4px 0; }
.tree .l1 { padding-left: 12px; background-image: var(--g), var(--g); background-position: 4px 0, 15px 0; }
.tree .l2 { padding-left: 23px; background-image: var(--g), var(--g), var(--g); background-position: 4px 0, 15px 0, 26px 0; }
.tree .l3 { padding-left: 37px; background-image: var(--g), var(--g), var(--g); background-position: 4px 0, 15px 0, 37px 0; }
.tree .l1 .ex, .tree .l2 .ex { margin-right: 4px; }
.tree .l3::before, .leaf::before { content: ""; width: 7px; height: 1px; background: #d2d2d2; }
.leaf::before { width: 6px; }
.tree .cur-view { margin: 0 -1px; padding: 0 1px; background: #e8e8e8; }

/* expander box, minus by default */
.ex {
    flex: none;
    width: 5px;
    height: 5px;
    border: 1px solid #b4bfcd;
    background: linear-gradient(#56708f, #56708f) center / 3px 1px no-repeat #fff;
}
.ex.plus {
    background: linear-gradient(#56708f, #56708f) center / 3px 1px no-repeat,
        linear-gradient(#56708f, #56708f) center / 1px 3px no-repeat, #fff;
}

.props { position: relative; flex: none; width: 124px; display: flex; flex-direction: column; background: #fff; border-right: 2px solid #eee; border-left: 1px solid #888; }
.type { height: 42px; display: flex; align-items: center; gap: 2px; padding: 1px; background: #f0f0f0; white-space: nowrap; }
.type .thumb { width: 38px; height: 38px; border: 1px solid #ddd; }
.type p { width: 75px; color: #444; }
.inst { height: 14px; display: flex; align-items: center; gap: 3px; background: #f0f0f0; }
.inst select { width: 75px; height: 13px; border: 1px solid #888; }
.inst button { display: flex; align-items: center; gap: 2px; white-space: nowrap; }
select {
    appearance: none;
    border-radius: 0;
    padding: 0 1px;
    background: linear-gradient(45deg, transparent 50%, #555 50%) right 4px center / 2px 2px no-repeat,
        linear-gradient(-45deg, transparent 50%, #555 50%) right 2px center / 2px 2px no-repeat, #f3f3f3;
}
.props table { width: 100%; border-spacing: 0; border-collapse: collapse; table-layout: fixed; }
.props .name { width: 57px; }
.props tr { height: 11px; }
.props th { height: 11px; padding: 0 2px 0 1px; background: #dcdcdc; text-align: left; font-weight: normal; }
.props th span { float: right; transform: rotate(90deg); }
.props td { height: 11px; padding: 0 0 0 5px; border-bottom: 1px solid #ddd; }
.props td + td { padding: 0 6px 0 1px; border-left: 1px solid #ddd; }
.props td input { display: block; width: 100%; height: 10px; border: 0; }
.props td .btn { display: block; width: 100%; height: 11px; line-height: 8px; }
.foot { margin-top: auto; height: 14px; display: flex; align-items: center; justify-content: space-between; padding: 0 1px; background: #f0f0f0; }
.foot .btn { width: 42px; }
.foot a, .actions a { color: #1a6fd0; text-decoration: underline; }

.btn {
    height: 12px;
    border: 1px solid #8a8a8a;
    border-radius: 2px;
    background: linear-gradient(#f4f4f4 45%, #dcdcdc 55%, #d2d2d2);
    line-height: 10px;
    white-space: nowrap;
}
.btn:disabled { background: #f4f4f4; border-color: #c4c4c4; color: #999; }
.btn.default { border-color: #3a9fd4; box-shadow: inset 0 0 0 1px #9bdcf6; }

.note { position: absolute; color: #3a3ad2; font: 20px/20px var(--ui); font-feature-settings: normal; }
.n1 { left: 61px; top: 126px; }
.n2 { left: 210px; top: 89px; }
.n3 { left: 55px; top: 77px; }

/* Model view */
.view {
    flex: 1;
    min-width: 0;
    display: grid;
    grid-template: 1fr 11px / 1fr 8px;
    border-left: 2px solid #aaa;
}
.canvas { position: relative; overflow: hidden; background: #fff; }
.model { position: absolute; left: 54px; top: 147px; width: 390px; height: 255px; }
.cube { position: absolute; right: 7px; top: 35px; width: 46px; height: 32px; }
.mdi { position: absolute; right: 1px; top: 4px; width: 28px; height: 8px; }
.mark { position: absolute; right: 26px; bottom: 4px; display: flex; align-items: center; gap: 6px; }
.mark svg { width: 44px; height: 38px; }
.mark span { color: #fff; font-size: 27px; line-height: 40px; text-shadow: 1px 1px 0 #999; white-space: nowrap; }
.vscroll { display: flex; flex-direction: column; align-items: center; justify-content: space-between; padding: 4px 0; background: #eee; }
.vscroll .up, .vscroll .down { width: 4px; height: 2px; background: #555; clip-path: polygon(0 0, 100% 0, 50% 100%); }
.vscroll .up { transform: rotate(180deg); }
.thumb { flex: none; }
.vscroll .thumb { width: 7px; height: 9px; border: 1px solid #aaa; background: #f3f3f3; }
.viewbar { grid-column: 1 / -1; display: flex; align-items: center; gap: 2px; padding: 0 10px; background: #f0f0f0; }
.viewbar svg { width: 10px; height: 9px; }
.viewbar .ratio { width: 31px; }
.viewbar .left, .viewbar .right { width: 2px; height: 4px; background: #444; clip-path: polygon(0 50%, 100% 0, 100% 100%); }
.viewbar .right { transform: rotate(180deg); }
.hscroll { flex: 1; display: flex; justify-content: center; }
.hscroll .thumb { width: 9px; height: 9px; border: 1px solid #999; border-radius: 1px; background: #ddd; }

/* Dialogs */
.dialog {
    position: absolute;
    display: flex;
    flex-direction: column;
    padding: 0 4px 4px;
    border: 1px solid #6b7785;
    border-radius: 3px 3px 0 0;
    font-family: var(--song);
    font-feature-settings: "hwid";
    white-space: nowrap;
    color: #111;
    box-shadow: 0 0 3px #0006;
}
.dialog h3 { display: flex; justify-content: space-between; align-items: center; font-feature-settings: normal; }
.dialog .x { display: flex; align-items: center; justify-content: center; width: 18px; height: 10px; border: 1px solid #9aa8b8; border-radius: 2px; }
.dialog .x svg { width: 7px; height: 6px; stroke: #777; stroke-width: 1.5; }
.dbody { flex: 1; background: #f0f0f0; }
.dialog label { display: flex; align-items: center; gap: 2px; }
.dialog label.plain { display: block; }
.dialog input[type="radio"] {
    appearance: none;
    flex: none;
    width: 7px;
    height: 7px;
    border: 1px solid #999;
    border-radius: 50%;
    background: #fff;
}
.dialog input[type="radio"]:checked { background: radial-gradient(#1b5f95 40%, #cfe9fa 55%); }

.pick { left: 158px; top: 130px; width: 269px; height: 158px; background: #dce7f3; }
.pick h3 { height: 18px; margin: 0 -4px; padding: 0 4px 0 5px; background: linear-gradient(#c3d0dd, #dce7f3); color: #555; }
.pick .dbody { display: flex; flex-direction: column; padding: 4px 6px 3px 5px; }
.pick p { margin-bottom: 9px; }
.target { display: flex; align-items: center; justify-content: flex-end; gap: 3px; height: 12px; margin-top: 1px; }
.dialog select { height: 12px; border: 1px solid #bbb; color: #888; }
.target select { width: 68px; }
.record { display: flex; align-items: center; justify-content: space-between; margin-top: 12px; }
.record label { line-height: 8px; align-items: flex-start; font-feature-settings: "hwid", "halt"; }
.pick .btn { width: 50px; }
.pick .noshare { margin-top: 21px; }
.actions { display: flex; gap: 5px; }
.pick .actions { margin-top: auto; align-items: center; }
.actions a { margin-right: auto; }

.place { left: 432px; top: 63px; width: 351px; height: 335px; background: #bdd3ea; border-right-color: #278089; border-bottom: 2px solid #278089; }
.place h3 { height: 17px; margin: 0 -4px; padding: 0 5px; background: linear-gradient(#a5bed8, #bdd3ea); }
.place .x { background: linear-gradient(#dc9080, #bc3824); border-color: #7d3a35; }
.place .x svg { stroke: #fff; }
.place .dbody { display: flex; flex-direction: column; padding: 2px 4px 2px 3px; }
.dtabs { display: flex; align-items: flex-end; }
.dtabs button { width: 27px; height: 10px; padding-left: 4px; border: 1px solid #999; border-bottom: 0; background: linear-gradient(#f3f3f3, #ddd); text-align: left; line-height: 9px; }
.dtabs .active { width: 29px; height: 12px; background: #fff; margin-bottom: -1px; }
.pane { flex: 1; display: flex; flex-direction: column; padding: 4px 5px 6px 8px; border: 1px solid #aaa; background: #fff; }
.pane .intro { line-height: 8px; margin-bottom: 8px; font-feature-settings: "halt"; }
.sites { flex: 1; display: flex; gap: 6px; margin-bottom: 3px; }
.sites ul { flex: 1; border: 1px solid #999; }
.sites li { height: 8px; line-height: 8px; background: #3399ff; color: #fff; }
.side-btns { display: flex; flex-direction: column; gap: 4px; }
.side-btns .btn { width: 67px; }
.angle { display: flex; gap: 4px; margin-top: 2px; }
.angle input, .angle select { width: 64px; height: 11px; border: 1px solid #bbb; color: #888; white-space: pre; background-color: #fff; }
.place .actions { justify-content: flex-end; margin-top: 5px; }
.place .actions .btn { width: 41px; height: 11px; line-height: 9px; }

/* Status bar */
.status {
    flex: none;
    height: 14px;
    display: flex;
    align-items: center;
    background: var(--chrome);
    border-top: 1px solid #bbb;
    white-space: nowrap;
}
.status p { width: 532px; font-family: var(--song); }
.status svg { width: 10px; height: 10px; }
.worksets { display: flex; align-items: center; gap: 4px; }
.worksets .push { margin-left: 7px; }
.worksets svg { opacity: .5; }
.worksets select { width: 115px; height: 11px; border: 1px solid #ddd; background-color: #fff; color: #777; }
.picks { display: flex; align-items: center; gap: 4px; margin-left: auto; margin-right: 34px; }
.picks span { margin-left: -4px; }
```
